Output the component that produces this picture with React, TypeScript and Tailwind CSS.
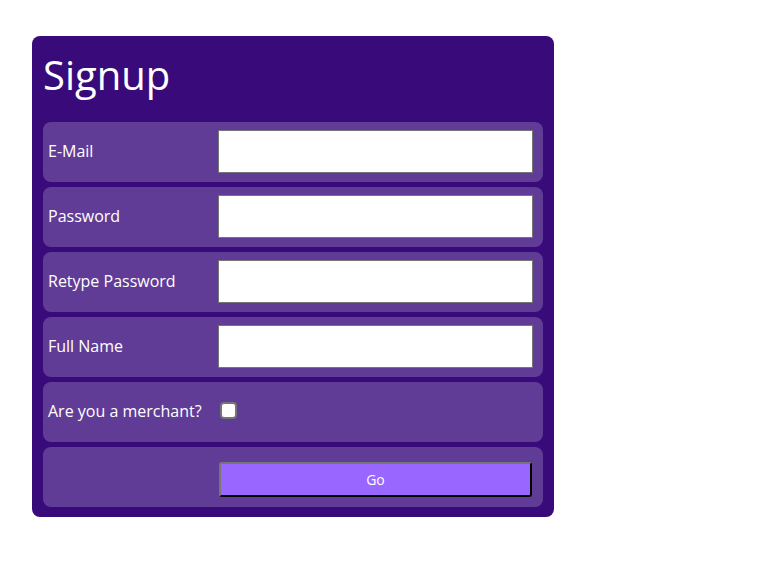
import React from "react";

const rows = ["E-Mail", "Password", "Retype Password", "Full Name"];

export default function App() {
  return (
    <div className="w-[775px] h-[567px] bg-white pt-[36px] pl-[32px]" style={{ fontFamily: '"Open Sans", sans-serif' }}>
      <div className="w-[522px] bg-[#380a7a] rounded-[8px] px-[11px] pb-[10px]">
        <h1 className="text-white text-[40px] leading-[78px] h-[86px]">Signup</h1>
        <div className="flex flex-col gap-[5px]">
          {rows.map((r) => (
            <div key={r} className="h-[60px] bg-[#603c96] rounded-[8px] flex items-start pl-[5px]">
              <span className="w-[170px] text-white text-[16px] leading-[22px] mt-[18px]">{r}</span>
              <input type={r.includes("Password") ? "password" : "text"} className="w-[315px] h-[43px] mt-[8px] bg-white border border-[#767676]" />
            </div>
          ))}
          <div className="h-[60px] bg-[#603c96] rounded-[8px] flex items-start pl-[5px]">
            <span className="w-[172px] text-white text-[16px] leading-[22px] mt-[18px]">Are you a merchant?</span>
            <span className="w-[17px] h-[17px] mt-[20px] bg-white border-2 border-[#767676] rounded-[4px]" />
          </div>
          <div className="h-[60px] bg-[#603c96] rounded-[8px] flex items-start pl-[176px]">
            <button className="w-[313px] h-[35px] mt-[15px] bg-[#9966ff] text-white text-[14px] border-2 border-t-[#767676] border-l-[#767676] border-r-black border-b-black rounded-[3px]">Go</button>
          </div>
        </div>
      </div>
    </div>
  );
}
